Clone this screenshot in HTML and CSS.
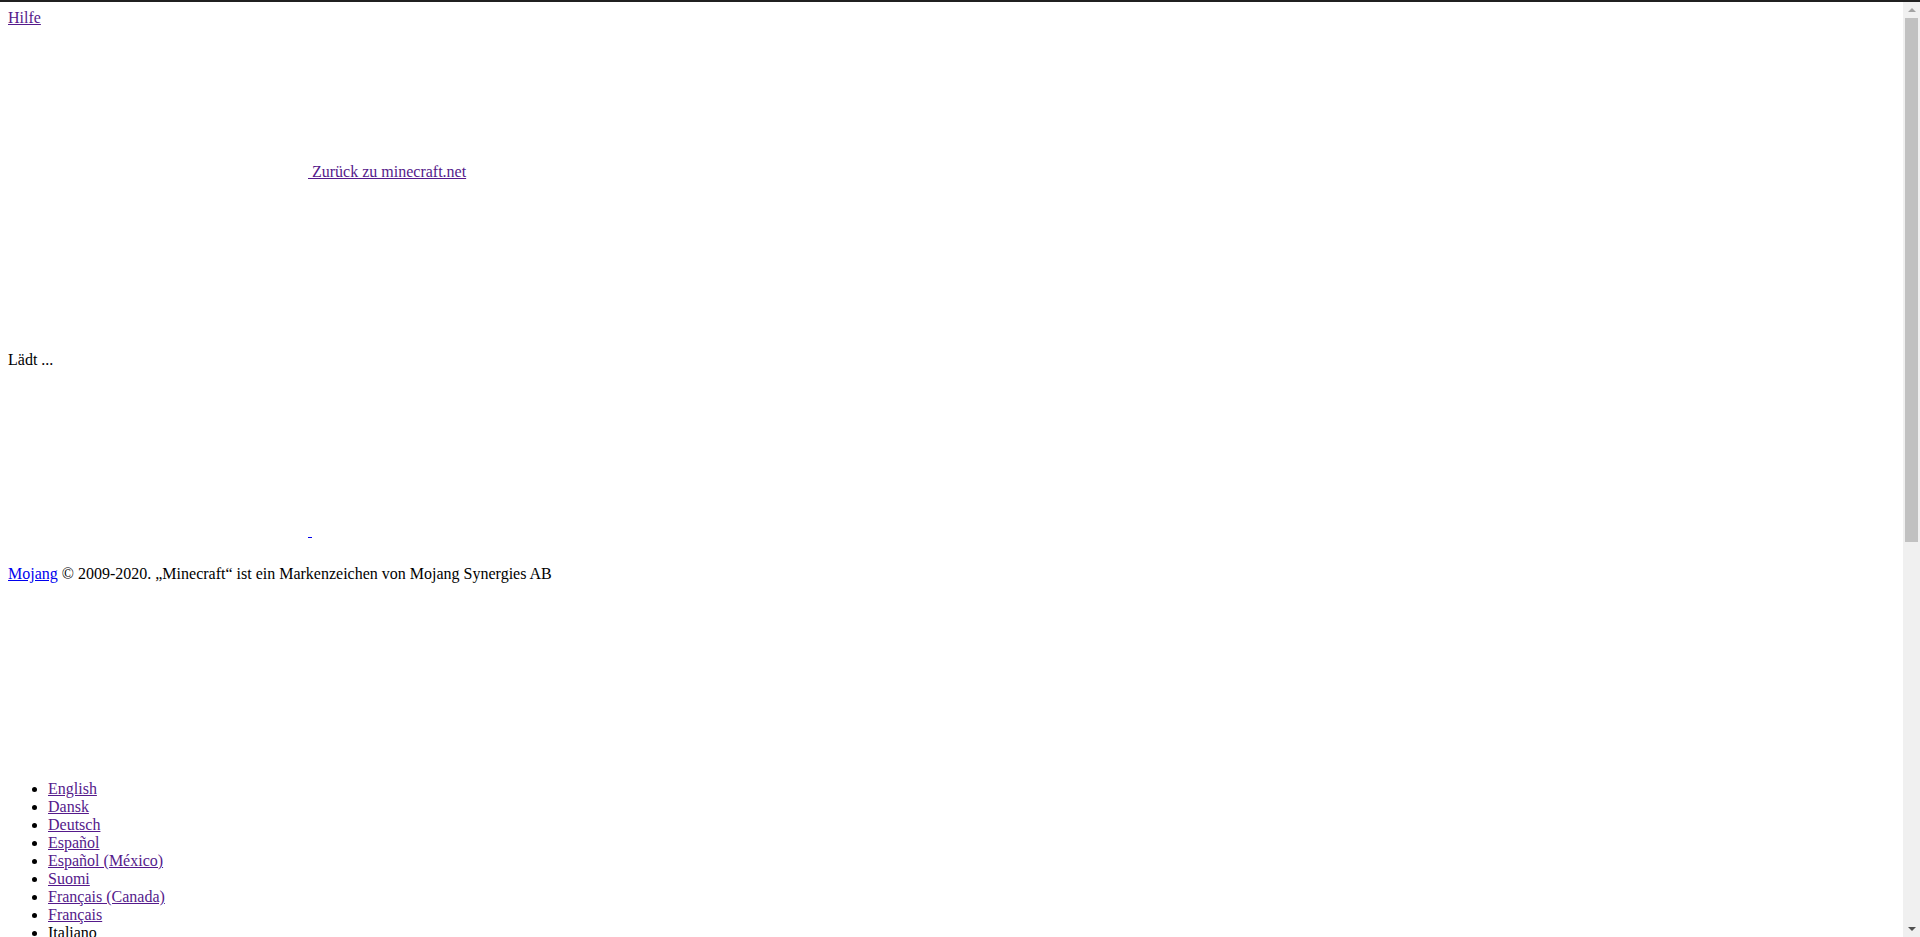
FILE: index.html
```html
<!DOCTYPE html>
<html lang="de">
<head>
<meta charset="utf-8">
<title>Minecraft</title>
<link rel="stylesheet" href="styles.css">
</head>
<body>
<div class="topline"></div>
<div class="scrollbar" aria-hidden="true">
  <div class="sb-btn sb-up"><span class="arrow-up"></span></div>
  <div class="sb-track"><div class="sb-thumb"></div></div>
  <div class="sb-btn sb-down"><span class="arrow-down"></span></div>
</div>
<header class="help-bar"><a class="visited" href="#">Hilfe</a></header>
<div class="logo-row"><span class="logo-slot"></span><a class="visited" href="#"> Zurück zu minecraft.net</a></div>
<p class="loading">Lädt ...</p>
<div class="footer-logo-row"><span class="logo-slot"></span><a class="fresh" href="#">&nbsp;</a></div>
<p class="copyright"><a class="fresh" href="#">Mojang</a> © 2009-2020. „Minecraft“ ist ein Markenzeichen von Mojang Synergies AB</p>
<ul class="languages">
<li><a class="visited" href="#">English</a></li>
<li><a class="visited" href="#">Dansk</a></li>
<li><a class="visited" href="#">Deutsch</a></li>
<li><a class="visited" href="#">Español</a></li>
<li><a class="visited" href="#">Español (México)</a></li>
<li><a class="visited" href="#">Suomi</a></li>
<li><a class="visited" href="#">Français (Canada)</a></li>
<li><a class="visited" href="#">Français</a></li>
<li><span class="plain">Italiano</span></li>
<li><a class="visited" href="#">日本語</a></li>
<li><a class="visited" href="#">한국어</a></li>
<li><a class="visited" href="#">Norsk</a></li>
<li><a class="visited" href="#">Nederlands</a></li>
<li><a class="visited" href="#">Polski</a></li>
<li><a class="visited" href="#">Português (Brasil)</a></li>
<li><a class="visited" href="#">Português</a></li>
<li><a class="visited" href="#">Русский</a></li>
<li><a class="visited" href="#">Svenska</a></li>
<li><a class="visited" href="#">Türkçe</a></li>
<li><a class="visited" href="#">简体中文</a></li>
<li><a class="visited" href="#">繁體中文</a></li>
<li><a class="visited" href="#">Čeština</a></li>
<li><a class="visited" href="#">Ελληνικά</a></li>
<li><a class="visited" href="#">Magyar</a></li>
<li><a class="visited" href="#">Bahasa Indonesia</a></li>
<li><a class="visited" href="#">Română</a></li>
<li><a class="visited" href="#">Slovenčina</a></li>
<li><a class="visited" href="#">Українська</a></li>
<li><a class="visited" href="#">Български</a></li>
<li><a class="visited" href="#">Català</a></li>
<li><a class="visited" href="#">Hrvatski</a></li>
<li><a class="visited" href="#">Eesti</a></li>
<li><a class="visited" href="#">Lietuvių</a></li>
<li><a class="visited" href="#">Latviešu</a></li>
<li><a class="visited" href="#">Slovenščina</a></li>
<li><a class="visited" href="#">Српски</a></li>
<li><a class="visited" href="#">ไทย</a></li>
<li><a class="visited" href="#">Tiếng Việt</a></li>
<li><a class="visited" href="#">Bahasa Melayu</a></li>
<li><a class="visited" href="#">Filipino</a></li>
<li><a class="visited" href="#">Íslenska</a></li>
<li><a class="visited" href="#">Gaeilge</a></li>
<li><a class="visited" href="#">Cymraeg</a></li>
<li><a class="visited" href="#">Euskara</a></li>
</ul>
</body>
</html>
```

FILE: styles.css
```css
html {
  background: #ffffff;
}

body {
  margin: 8px;
  font-family: "Liberation Serif", "Noto Sans CJK JP", serif;
  font-size: 16px;
  color: #000000;
}

.topline {
  position: fixed;
  top: 0;
  left: 0;
  right: 0;
  height: 2px;
  background: #202020;
  z-index: 3;
}

a.visited {
  color: #551a8b;
}

a.fresh {
  color: #0000ee;
}

.help-bar {
  display: block;
  padding-top: 1px;
}

.logo-row,
.footer-logo-row {
  display: block;
}

.logo-slot {
  display: inline-block;
  width: 300px;
  height: 150px;
  vertical-align: baseline;
}

.footer-logo-row .logo-slot {
  height: 151px;
}

.loading {
  margin: 170px 0 16px;
}

.footer-logo-row {
  margin: 0;
}

.copyright {
  margin: 25px 0 0;
}

.languages {
  margin: 197px 0 16px;
  padding-left: 40px;
}

.plain {
  color: #000000;
}

/* painted classic scrollbar overlay */
.scrollbar {
  position: fixed;
  top: 0;
  right: 0;
  bottom: 0;
  width: 17px;
  background: #f0f0f0;
  display: flex;
  flex-direction: column;
  z-index: 2;
}

.sb-btn {
  height: 17px;
  flex: 0 0 17px;
  display: flex;
  justify-content: center;
  align-items: flex-start;
}

.sb-up {
  padding-top: 8px;
  box-sizing: border-box;
}

.sb-down {
  padding-top: 7px;
  box-sizing: border-box;
}

.arrow-up {
  width: 0;
  height: 0;
  border-left: 4px solid transparent;
  border-right: 4px solid transparent;
  border-bottom: 4px solid #a3a3a3;
}

.arrow-down {
  width: 0;
  height: 0;
  border-left: 4px solid transparent;
  border-right: 4px solid transparent;
  border-top: 4px solid #505050;
}

.sb-track {
  flex: 1;
  display: flex;
  flex-direction: column;
}

.sb-thumb {
  margin: 1px 2px 0 2px;
  height: 524px;
  background: #c1c1c1;
}
```
